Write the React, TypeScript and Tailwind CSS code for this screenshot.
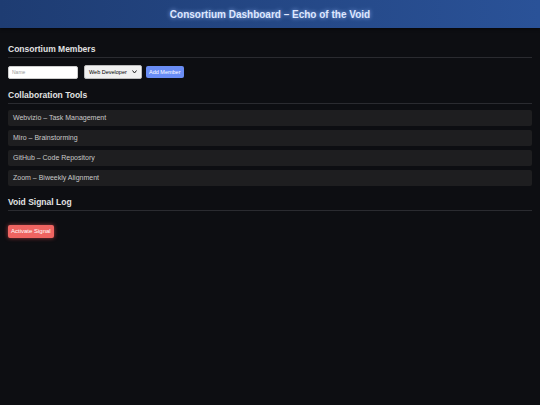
import React from "react";

const tools = [
  "Webvizio – Task Management",
  "Miro – Brainstorming",
  "GitHub – Code Repository",
  "Zoom – Biweekly Alignment",
];

function SectionTitle({ children }: { children: React.ReactNode }) {
  return (
    <h2 className="text-[8.5px] leading-[11px] font-bold text-[#e2e2e2] pb-[2px] border-b border-[#2a2b30]">
      {children}
    </h2>
  );
}

export default function App() {
  return (
    <div
      className="w-[540px] h-[405px] bg-[#0d0e12] overflow-hidden"
      style={{ fontFamily: '"Liberation Sans", Arial, sans-serif' }}
    >
      <header className="h-[28px] flex items-center justify-center bg-gradient-to-r from-[#1e3c72] to-[#2a5298] shadow-[0_1px_3px_rgba(0,0,0,0.6)]">
        <h1 className="text-[10px] font-bold text-[#dfe8ff] [text-shadow:0_0_4px_rgba(160,190,255,0.9)]">
          Consortium Dashboard – Echo of the Void
        </h1>
      </header>
      <main className="px-2 pt-[16px]">
        <section>
          <SectionTitle>Consortium Members</SectionTitle>
          <div className="flex items-center gap-[4px] mt-[7px]">
            <input
              placeholder="Name"
              className="w-[70px] h-[13px] bg-white rounded-[2px] border border-[#ccc] px-[3px] text-[5px] text-black placeholder:text-[#999] outline-none"
            />
            <div className="w-[58px] h-[14px] bg-[#f0f0f0] rounded-[2px] border border-[#bbb] flex items-center justify-between px-[4px] ml-[2px]">
              <span className="text-[5.5px] text-black">Web Developer</span>
              <svg width="5" height="4" viewBox="0 0 10 8">
                <path d="M1 1l4 5 4-5" stroke="#222" strokeWidth="2" fill="none" />
              </svg>
            </div>
            <button className="h-[12px] px-[3px] bg-[#6a8df5] rounded-[2px] text-[5.5px] text-white">
              Add Member
            </button>
          </div>
        </section>
        <section className="mt-[11px]">
          <SectionTitle>Collaboration Tools</SectionTitle>
          <div className="flex flex-col gap-[4px] mt-[6px]">
            {tools.map((t) => (
              <div
                key={t}
                className="h-[16px] bg-[#1e1e20] rounded-[2px] flex items-center px-[5px] text-[7px] text-[#c9c9c9]"
              >
                {t}
              </div>
            ))}
          </div>
        </section>
        <section className="mt-[11px]">
          <SectionTitle>Void Signal Log</SectionTitle>
          <button className="mt-[14px] h-[13px] px-[3px] bg-[#ef6461] rounded-[2px] text-[6px] text-white shadow-[0_0_4px_rgba(255,90,90,0.6)]">
            Activate Signal
          </button>
        </section>
      </main>
    </div>
  );
}
